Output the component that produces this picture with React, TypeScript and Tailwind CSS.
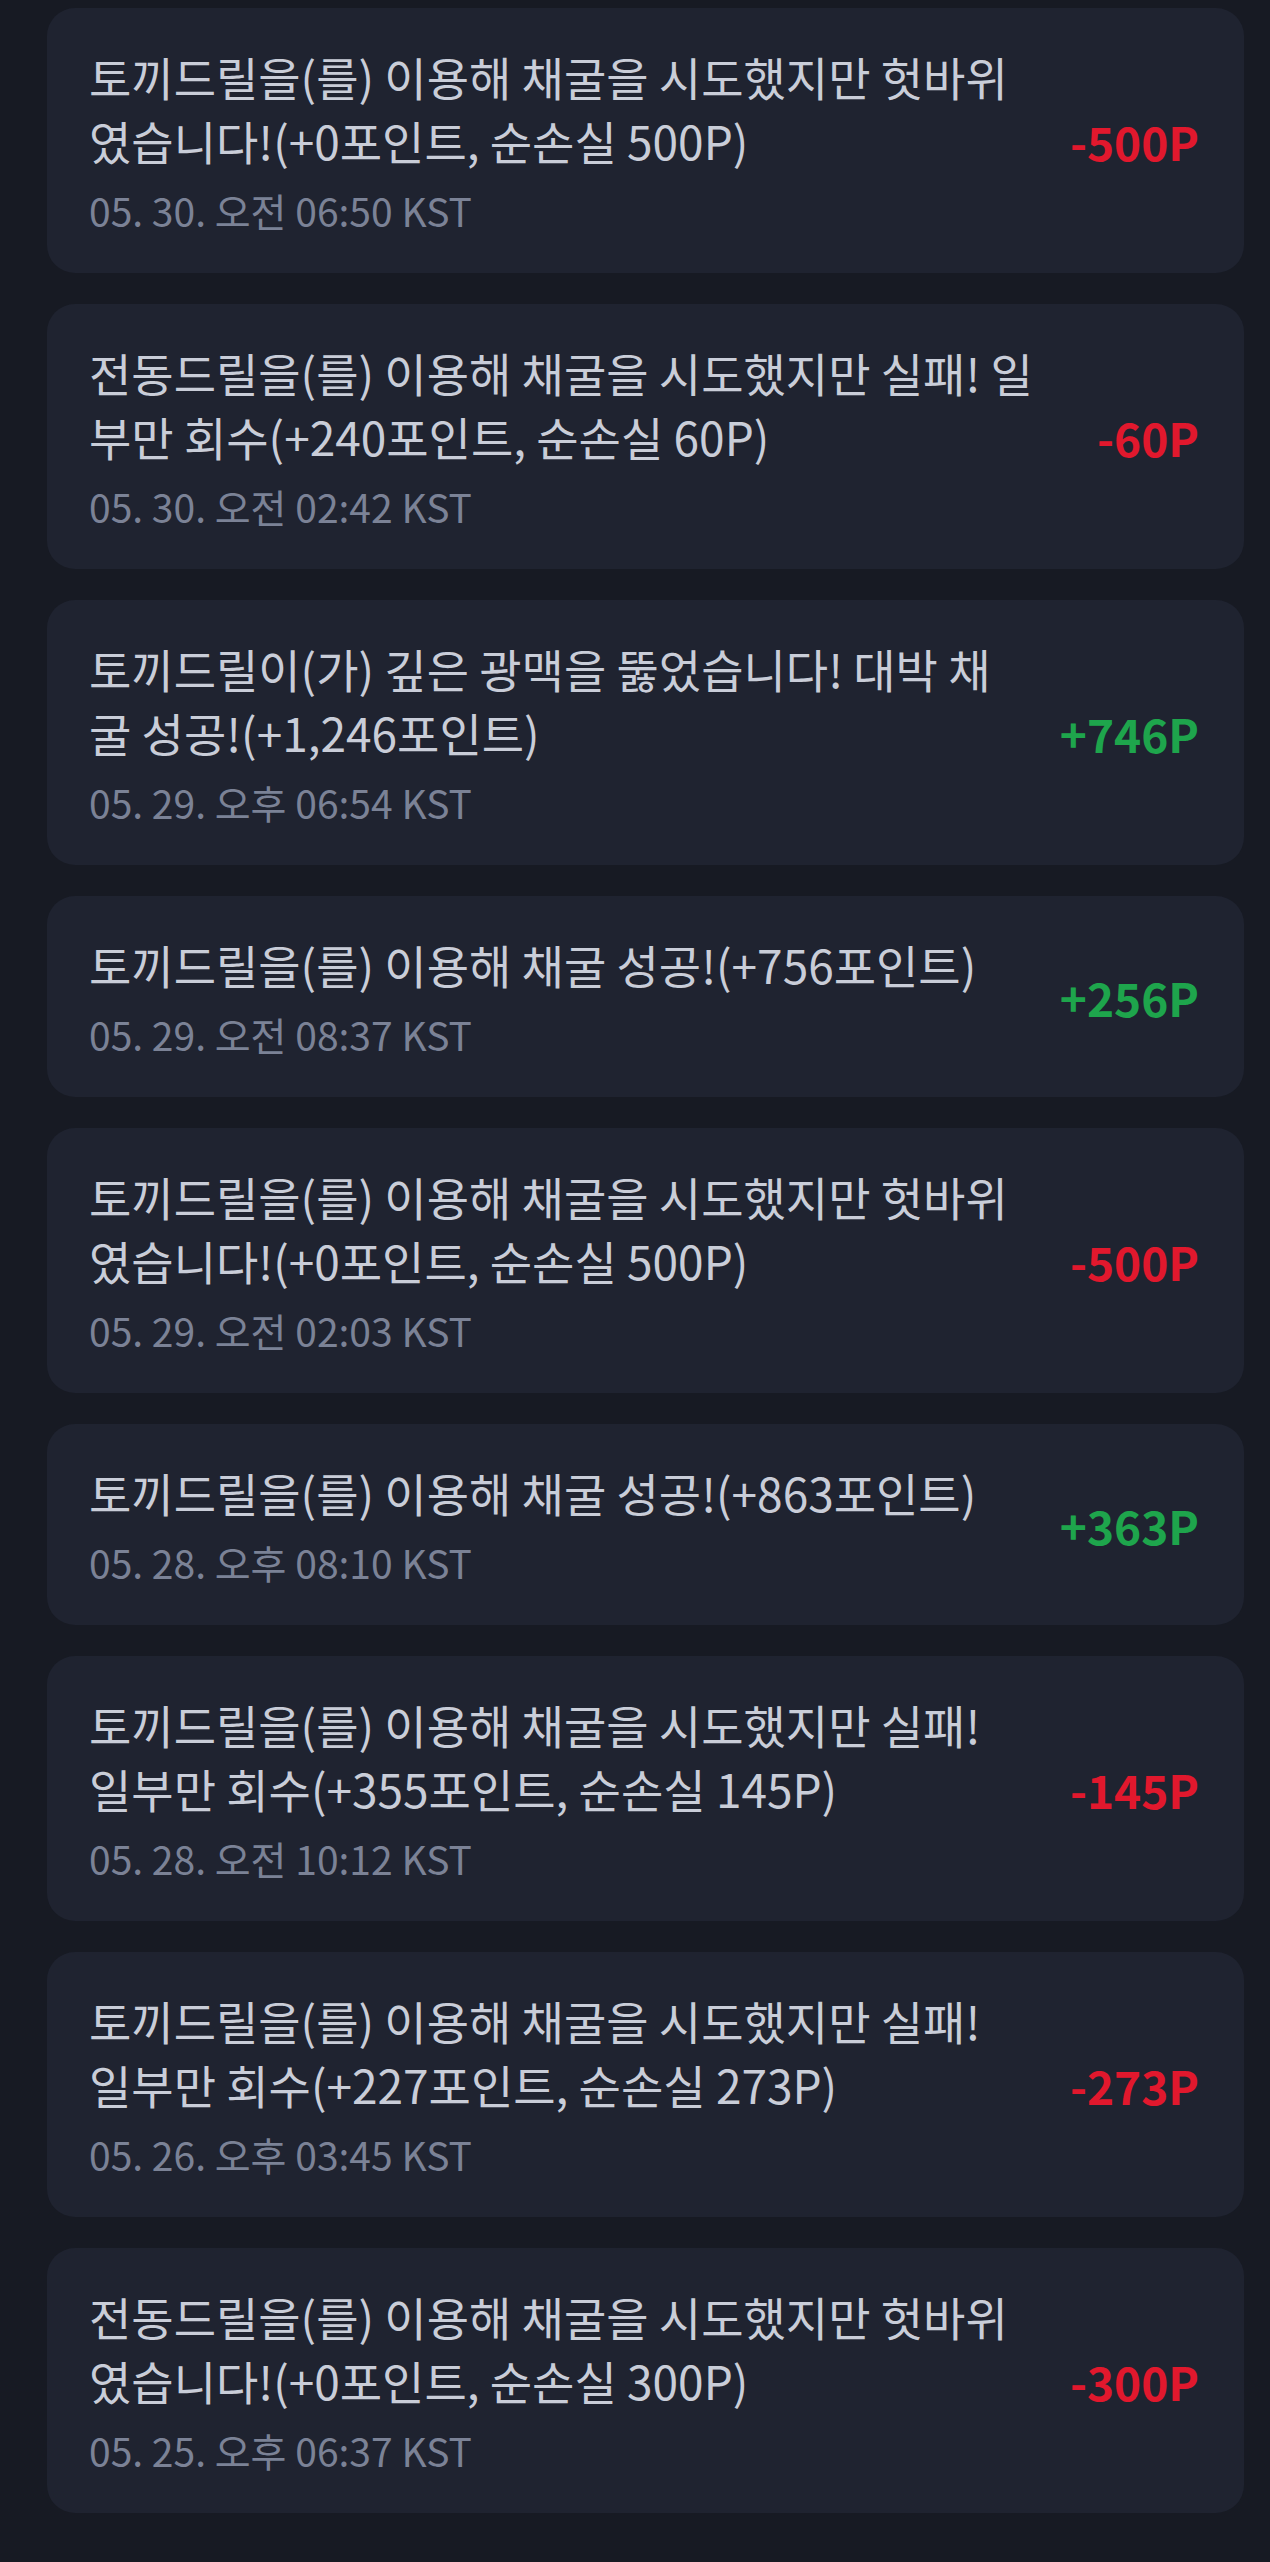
import React from 'react';

type MiningLog = {
  message: string;
  time: string;
  amount: string;
  gain: boolean;
};

const logs: MiningLog[] = [
  {
    message: '토끼드릴을(를) 이용해 채굴을 시도했지만 헛바위였습니다!(+0포인트, 순손실 500P)',
    time: '05. 30. 오전 06:50 KST',
    amount: '-500P',
    gain: false,
  },
  {
    message: '전동드릴을(를) 이용해 채굴을 시도했지만 실패! 일부만 회수(+240포인트, 순손실 60P)',
    time: '05. 30. 오전 02:42 KST',
    amount: '-60P',
    gain: false,
  },
  {
    message: '토끼드릴이(가) 깊은 광맥을 뚫었습니다! 대박 채굴 성공!(+1,246포인트)',
    time: '05. 29. 오후 06:54 KST',
    amount: '+746P',
    gain: true,
  },
  {
    message: '토끼드릴을(를) 이용해 채굴 성공!(+756포인트)',
    time: '05. 29. 오전 08:37 KST',
    amount: '+256P',
    gain: true,
  },
  {
    message: '토끼드릴을(를) 이용해 채굴을 시도했지만 헛바위였습니다!(+0포인트, 순손실 500P)',
    time: '05. 29. 오전 02:03 KST',
    amount: '-500P',
    gain: false,
  },
  {
    message: '토끼드릴을(를) 이용해 채굴 성공!(+863포인트)',
    time: '05. 28. 오후 08:10 KST',
    amount: '+363P',
    gain: true,
  },
  {
    message: '토끼드릴을(를) 이용해 채굴을 시도했지만 실패! 일부만 회수(+355포인트, 순손실 145P)',
    time: '05. 28. 오전 10:12 KST',
    amount: '-145P',
    gain: false,
  },
  {
    message: '토끼드릴을(를) 이용해 채굴을 시도했지만 실패! 일부만 회수(+227포인트, 순손실 273P)',
    time: '05. 26. 오후 03:45 KST',
    amount: '-273P',
    gain: false,
  },
  {
    message: '전동드릴을(를) 이용해 채굴을 시도했지만 헛바위였습니다!(+0포인트, 순손실 300P)',
    time: '05. 25. 오후 06:37 KST',
    amount: '-300P',
    gain: false,
  },
];

function LogCard({ log }: { log: MiningLog }) {
  return (
    <div className="flex items-center gap-[60px] rounded-[28px] bg-[#1f2330] pl-[42px] pr-[45px] pt-[36px] pb-[35px]">
      <div className="min-w-0 flex-1">
        <p className="text-[46px] leading-[64px] text-[#c9cdd8] break-all">{log.message}</p>
        <p className="mt-[10px] text-[39px] leading-[56px] text-[#7b8296]">{log.time}</p>
      </div>
      <span
        className={
          log.gain
            ? 'shrink-0 text-[46px] font-bold text-[#1ea54c]'
            : 'shrink-0 text-[46px] font-bold text-[#e1182d]'
        }
      >
        {log.amount}
      </span>
    </div>
  );
}

export default function App() {
  return (
    <div className="min-h-[2562px] bg-[#171a23] pl-[47px] pr-[26px] pt-[8px] pb-[48px] font-['Noto_Sans_CJK_KR',sans-serif]">
      <div className="flex flex-col gap-[31px]">
        {logs.map((log, i) => (
          <LogCard key={i} log={log} />
        ))}
      </div>
    </div>
  );
}
